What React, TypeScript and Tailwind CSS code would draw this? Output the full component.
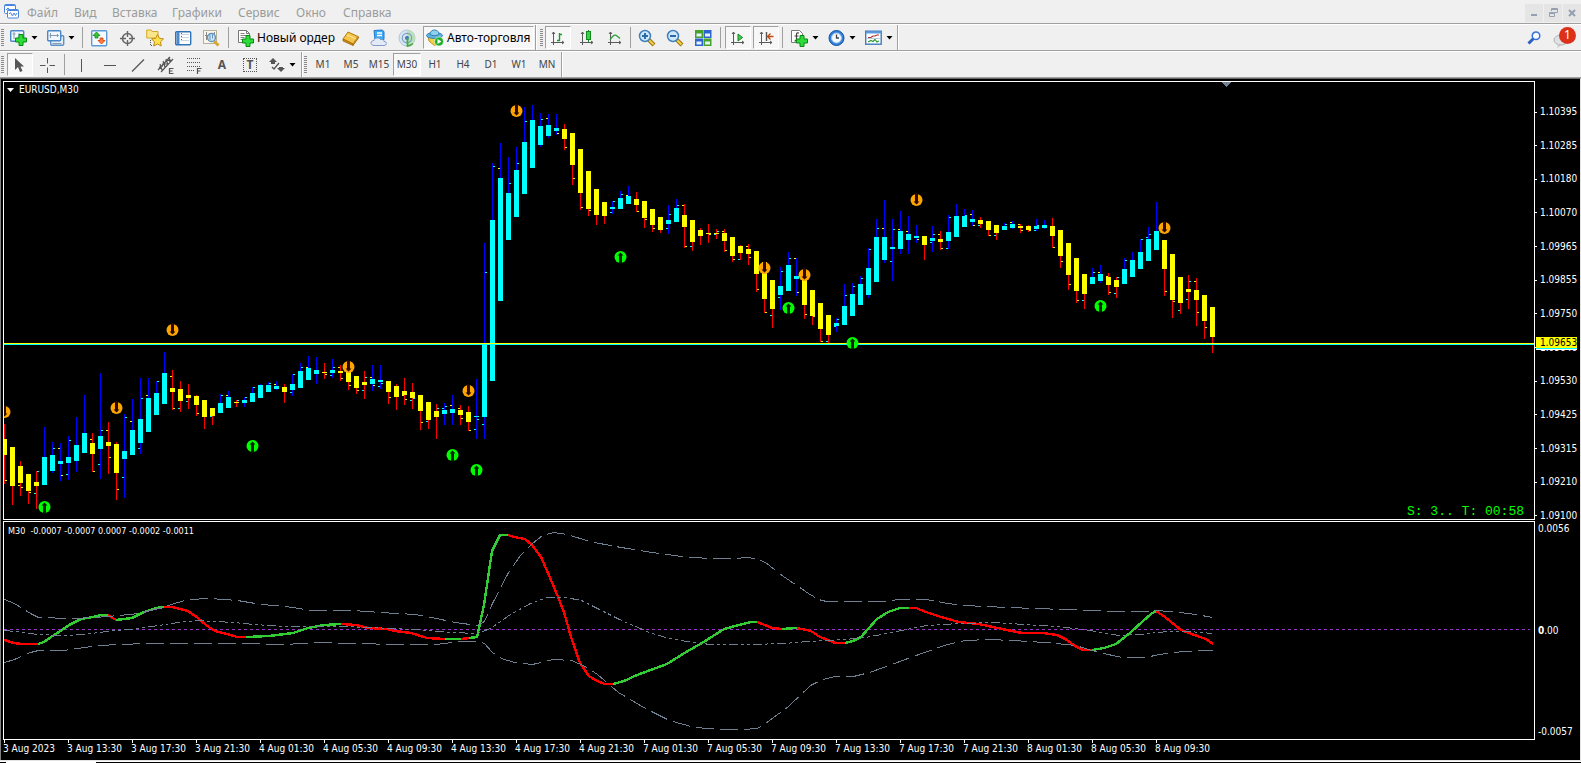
import React from "react";

type Candle = [string, number, number, number, number, string?];

/* colour, wick top, body top, body bottom, wick bottom, open (L) / close (R) ticks */
const candles: Candle[] = [
  ["y", 424, 439, 455, 484, "Ry480"], ["y", 447, 447, 486, 505], ["y", 461, 466, 483, 496, "Ly485 Ry487"],
  ["y", 474, 474, 491, 504, "Ry492"], ["y", 471, 482, 486, 509, "Rc471 Lc493"], ["c", 427, 457, 485, 485],
  ["c", 442, 455, 471, 473, "Rc448"], ["c", 443, 461, 464, 481, "Ly448 Ry475"], ["c", 436, 457, 463, 480, "Rc440 Lc474"],
  ["c", 417, 445, 461, 472], ["c", 395, 433, 453, 453], ["y", 433, 443, 454, 472, "Ly439 Ry471"],
  ["c", 373, 436, 449, 479, "Rc430 Lc464"], ["y", 422, 442, 446, 474, "Ly430 Ry457"], ["y", 442, 444, 473, 500, "Ry489"],
  ["c", 414, 451, 459, 498, "Rc417 Lc477"], ["c", 399, 430, 455, 455, "Ly421"], ["c", 378, 419, 443, 454, "Rc398 Lc448"],
  ["c", 378, 398, 432, 432, "Ly395"], ["c", 381, 393, 415, 415, "Rc381"], ["c", 352, 373, 404, 404],
  ["y", 370, 388, 392, 410, "Ly376 Ry408"], ["y", 381, 389, 401, 412, "Lc408"], ["y", 384, 395, 398, 409, "Lc401"],
  ["y", 395, 396, 405, 416, "Ry413"], ["y", 400, 400, 417, 429], ["y", 408, 408, 416, 425, "Lc416"],
  ["c", 394, 403, 413, 413, "Rc395"], ["c", 391, 397, 408, 408, "Ly395"], ["y", 400, 402, 403, 407, "Rc400"],
  ["c", 397, 400, 403, 407, "Rc397"], ["c", 387, 393, 402, 402, "Rc387"], ["c", 384, 385, 398, 398],
  ["c", 382, 385, 392, 392, "Rc383"], ["c", 381, 386, 389, 390, "Ly384"], ["y", 384, 387, 392, 403],
  ["c", 374, 384, 390, 396, "Rc374 Lc392"], ["c", 363, 371, 388, 388, "Rc367"], ["c", 356, 368, 380, 380, "Ly367"],
  ["c", 357, 370, 374, 384], ["y", 363, 372, 373, 379, "Ry374"], ["c", 359, 370, 373, 378, "Rc367 Lc375"],
  ["y", 365, 371, 373, 381, "Ly367 Ry378"], ["y", 369, 372, 382, 390, "Ry385"], ["y", 376, 376, 388, 394, "Ry390"],
  ["y", 371, 382, 385, 399, "Rc377 Lc390"], ["c", 365, 379, 384, 391, "Ly377 Ry385"], ["c", 365, 380, 382, 389, "Rc383 Lc386"],
  ["y", 381, 381, 392, 404, "Ry397"], ["y", 384, 386, 397, 410], ["y", 378, 391, 395, 405, "Ly395 Ry399"],
  ["y", 383, 392, 398, 409, "Rc398 Lc400"], ["y", 395, 395, 411, 430, "Ry422"], ["y", 402, 402, 420, 429, "Lc421"],
  ["y", 404, 411, 417, 439, "Rc408"], ["c", 403, 410, 414, 425, "Lc408 Rc406"], ["c", 395, 409, 413, 425, "Ly405"],
  ["y", 405, 410, 415, 425, "Ly408 Ry418"], ["y", 406, 412, 422, 431, "Ry430"], ["c", 379, 416, 417, 439, "Rc419 Lc429"],
  ["c", 243, 344, 417, 439, "Lc424 Rc272"], ["c", 163, 220, 381, 381, "Rc166"], ["c", 143, 178, 301, 301, "Ly168"],
  ["c", 157, 193, 240, 240, "Rc183"], ["c", 147, 170, 217, 217, "Rc163"], ["c", 107, 142, 194, 194, "Rc121"],
  ["c", 105, 120, 168, 168], ["c", 113, 126, 145, 147, "Rc119"], ["c", 114, 125, 136, 138, "Ly118"],
  ["c", 114, 128, 131, 135, "Ry133"], ["y", 124, 129, 139, 150, "Ry147"], ["y", 133, 133, 165, 185, "Ry178"],
  ["y", 149, 149, 193, 210, "Ry207"], ["y", 171, 171, 209, 216, "Ry210"], ["y", 189, 189, 215, 225],
  ["y", 202, 202, 216, 224], ["c", 201, 207, 209, 214, "Rc201 Lc212"], ["c", 191, 198, 209, 209, "Rc194"],
  ["c", 186, 196, 204, 204, "Ly195"], ["y", 192, 199, 205, 212, "Ry211"], ["y", 201, 201, 218, 228, "Ry219"],
  ["y", 209, 209, 225, 232, "Ry228"], ["y", 217, 217, 230, 233], ["c", 205, 220, 224, 234, "Rc214 Lc228"],
  ["c", 199, 208, 222, 222, "Rc205"], ["y", 204, 215, 227, 248, "Ly205 Ry246"], ["y", 220, 220, 242, 251, "Lc246"],
  ["y", 228, 230, 236, 245], ["y", 224, 233, 234, 243, "Ry234"], ["y", 229, 233, 234, 239, "Rc231 Lc234"],
  ["y", 229, 233, 241, 252, "Ly231 Ry250"], ["y", 237, 237, 256, 262, "Ry259"], ["y", 245, 246, 253, 260, "Lc259"],
  ["y", 244, 249, 254, 265, "Ly246 Ry257"], ["y", 251, 251, 274, 292, "Ry289"], ["y", 262, 262, 299, 313, "Ry312"],
  ["y", 280, 280, 309, 328, "Lc315"], ["c", 267, 286, 295, 310, "Rc271 Lc297"], ["c", 252, 265, 291, 291, "Rc258"],
  ["c", 258, 276, 279, 296, "Ly258 Ry292"], ["y", 277, 277, 305, 319, "Ry314"], ["y", 290, 290, 316, 325, "Ry316"],
  ["y", 303, 303, 329, 342, "Ry341"], ["y", 315, 315, 335, 343, "Lc341"], ["c", 318, 323, 326, 332, "Rc319 Lc326"],
  ["c", 284, 306, 325, 325, "Rc295"], ["c", 283, 294, 316, 316, "Rc286"], ["c", 276, 284, 305, 305, "Rc278"],
  ["c", 248, 268, 295, 298, "Rc249"], ["c", 219, 237, 282, 282, "Rc228"], ["c", 200, 237, 260, 263, "Ly228"],
  ["c", 219, 247, 249, 281, "Rc229 Lc261"], ["c", 211, 231, 249, 254, "Ly229"], ["c", 216, 234, 240, 254, "Ly231"],
  ["c", 225, 236, 238, 243, "Ry239"], ["y", 236, 236, 245, 260], ["c", 226, 238, 241, 252, "Rc234 Lc242"],
  ["y", 231, 239, 242, 250, "Ly234 Ry248"], ["c", 215, 232, 241, 249, "Rc217 Lc248"], ["c", 204, 216, 237, 237],
  ["c", 209, 216, 227, 227, "Rc215"], ["c", 210, 219, 222, 226, "Ly214 Ry225"], ["y", 217, 220, 224, 228, "Lc225"],
  ["y", 221, 221, 230, 236, "Ry235"], ["y", 225, 225, 233, 240, "Lc235"], ["c", 223, 226, 230, 230, "Rc224"],
  ["c", 221, 224, 228, 229, "Ly222"], ["y", 224, 226, 228, 233, "Ly224 Ry230"], ["y", 225, 226, 230, 232, "Ry230"],
  ["c", 219, 226, 229, 231, "Rc225 Lc230"], ["c", 220, 225, 228, 229], ["y", 218, 226, 236, 248, "Ry247"],
  ["y", 230, 230, 256, 268, "Ry261"], ["y", 243, 243, 275, 290, "Ry284"], ["y", 258, 258, 291, 303, "Ry300"],
  ["y", 274, 274, 294, 309, "Lc300"], ["c", 268, 277, 284, 284, "Rc272"], ["c", 265, 274, 281, 283, "Ly272"],
  ["y", 273, 277, 285, 295, "Ly276 Ry292"], ["y", 277, 280, 287, 298, "Rc277 Lc293"], ["c", 258, 269, 284, 284, "Rc260"],
  ["c", 252, 260, 277, 277], ["c", 239, 252, 269, 269, "Rc239"], ["c", 227, 239, 261, 261, "Rc234 Lc237"],
  ["c", 202, 231, 250, 250], ["y", 240, 240, 269, 296, "Ry291"], ["y", 254, 254, 300, 318, "Ry301"],
  ["y", 277, 277, 303, 314, "Lc310"], ["y", 275, 289, 292, 309, "Rc281 Lc299"], ["y", 278, 290, 300, 326, "Ly281 Ry312"],
  ["y", 295, 295, 321, 339, "Ry327"], ["y", 307, 307, 337, 353],
];

const sellMarks = [[4, 412], [116, 408], [172, 330], [348, 367], [468, 391], [516, 111], [764, 268], [804, 275], [916, 200], [1164, 228]];
const buyMarks = [[44, 507], [252, 446], [452, 455], [476, 470], [620, 257], [788, 308], [852, 343], [1100, 306]];

const momentum: [string, string][] = [
  ["r", "4,640 14,643 22,644 38,644"],
  ["g", "38,644 44,642 51,637 62,630 69,625 81,619 93,617 101,615 108,615"],
  ["r", "108,615 116,620"],
  ["g", "116,620 132,618 144,612 156,608 164,607"],
  ["r", "164,607 172,607 188,611 198,618 206,625 215,631 227,634 237,637 246,637"],
  ["g", "246,637 269,636 293,633 308,628 324,625 341,624"],
  ["r", "341,624 356,625 368,628 387,629 395,631 411,633 427,638 445,639"],
  ["g", "445,639 461,639"],
  ["r", "461,639 469,638"],
  ["g", "469,638 477,637 484,605 492,551 500,535 508,535"],
  ["r", "508,535 514,537 525,539 532,545 541,557 548,573 556,592 564,612 571,637 580,663 589,676 597,681 605,684 613,684"],
  ["g", "613,684 624,681 637,675 667,664 686,652 702,643 724,629 739,625 751,622 757,622"],
  ["r", "757,622 765,625 772,628 782,629"],
  ["g", "782,629 797,628"],
  ["r", "797,628 811,631 820,637 835,643 845,643"],
  ["g", "845,643 853,641 861,637 869,628 877,619 888,612 900,608 909,608"],
  ["r", "909,608 916,608 926,612 941,617 959,622 979,624 1002,629 1022,633 1043,633 1057,635 1067,640 1075,646 1083,650 1092,650"],
  ["g", "1092,650 1104,648 1116,644 1130,633 1143,621 1151,614 1156,611"],
  ["r", "1156,611 1165,617 1181,630 1200,637 1206,639 1213,644"],
];

const upperBand =
  "4,599 14,603 22,608 30,613 38,617 71,618 95,617 119,615 138,613 162,607 174,603 188,599 210,598 237,600 261,604 285,606 312,610 352,610 380,612 415,614 431,617 455,622 477,625 484,621 492,603 508,572 520,555 532,543 542,535 553,532 567,534 589,541 615,546 645,551 681,556 708,558 737,558 745,557 755,558 765,562 783,576 808,593 818,599 826,601 886,601 898,599 926,599 947,603 963,605 1008,607 1090,610 1118,611 1147,611 1153,610 1171,611 1196,614 1212,617";
const middleBand =
  "4,630 24,632 36,634 67,635 91,633 115,630 130,629 158,625 178,622 198,620 233,622 253,624 285,626 340,626 395,628 427,630 451,632 477,633 490,628 510,614 530,603 547,597 565,597 581,600 597,608 619,619 649,632 665,637 686,641 710,644 751,644 783,643 808,641 845,639 865,637 886,633 906,629 926,625 959,623 992,622 1024,624 1057,626 1090,630 1118,635 1139,634 1167,631 1188,631 1212,633";
const lowerBand =
  "4,662 14,659 30,652 38,650 63,650 91,646 115,644 150,643 202,643 237,643 285,644 316,642 356,643 395,644 435,644 461,641 477,641 484,643 492,652 501,658 514,662 532,664 553,659 571,660 585,666 597,674 618,692 645,708 669,720 694,727 722,729 743,729 757,728 765,723 788,706 810,685 822,679 835,676 853,676 869,672 886,666 910,657 947,644 965,640 988,639 1012,640 1045,642 1075,645 1098,652 1122,657 1145,657 1159,654 1183,651 1200,650 1212,650";

const prices = ["1.10395", "1.10285", "1.10180", "1.10070", "1.09965", "1.09855", "1.09750", "1.09640", "1.09530", "1.09425", "1.09315", "1.09210", "1.09100"];
const times = [
  "3 Aug 2023", "3 Aug 13:30", "3 Aug 17:30", "3 Aug 21:30", "4 Aug 01:30", "4 Aug 05:30", "4 Aug 09:30", "4 Aug 13:30", "4 Aug 17:30", "4 Aug 21:30",
  "7 Aug 01:30", "7 Aug 05:30", "7 Aug 09:30", "7 Aug 13:30", "7 Aug 17:30", "7 Aug 21:30", "8 Aug 01:30", "8 Aug 05:30", "8 Aug 09:30",
];

const tone: Record<string, string> = { c: "#00ffff", y: "#ffff00", r: "#ff0000", g: "#32cd32" };
const chartFont = "font-['DejaVu_Sans_Condensed','DejaVu_Sans',sans-serif] text-white";

function PriceChart() {
  return (
    <svg className="block h-full w-full" shapeRendering="crispEdges" role="img" aria-label="EURUSD M30">
      <g transform="translate(-4 -82)">
        {candles.map(([c, wt, bt, bb, wb, ticks], i) => {
          const x = 4 + i * 8;
          return (
            <g key={i}>
              <rect x={x} y={wt} width={1} height={wb - wt} fill={c === "c" ? "#0000ff" : "#ff0000"} />
              <rect x={x - 2} y={bt} width={5} height={bb - bt} fill={tone[c]} />
              {ticks?.split(" ").map((t) => (
                <rect key={t} x={t[0] === "L" ? x - 2 : x + 1} y={Number(t.slice(2))} width={2} height={1} fill={tone[t[1]]} />
              ))}
            </g>
          );
        })}
        <rect x={4} y={343} width="100%" height={1} fill="#ffff00" />
        <rect x={4} y={344} width="100%" height={1} fill="#00ffff" />
        <path d="M1222 82h9l-4 5h-1z" fill="#708090" />
        <g shapeRendering="auto">
          {sellMarks.map(([x, y]) => (
            <g key={x} transform={`translate(${x + 0.5} ${y})`}>
              <circle r="6" fill="#ffa500" />
              <path d="M-1.500 -6.500H1.500V1.500H3L0 4.600L-3 1.500H-1.500Z" fill="#2a0a00" />
            </g>
          ))}
          {buyMarks.map(([x, y]) => (
            <g key={x} transform={`translate(${x + 0.5} ${y})`}>
              <circle r="6" fill="#00ff00" />
              <path d="M-1.500 6.500H1.500V-1.500H3L0 -4.600L-3 -1.500H-1.500Z" fill="#002000" />
            </g>
          ))}
        </g>
      </g>
    </svg>
  );
}

function IndicatorChart() {
  return (
    <svg className="block h-full w-full" shapeRendering="crispEdges" fill="none" role="img" aria-label="M30">
      <g transform="translate(-4 -522)">
        <line x1="4" x2="100%" y1="629.5" y2="629.5" stroke="#9932cc" strokeDasharray="3 3" />
        {momentum.map(([c, p]) => (
          <polyline key={p} points={p} stroke={tone[c]} strokeWidth="2.4" />
        ))}
        <g transform="translate(0.5 0.5)">
          <polyline points={upperBand} stroke="#708090" strokeDasharray="18 6" />
          <polyline points={middleBand} stroke="#708090" strokeDasharray="9 3 3 3 3 3" />
          <polyline points={lowerBand} stroke="#708090" strokeDasharray="18 6" />
        </g>
      </g>
    </svg>
  );
}

/* ---------- toolbar pieces ---------- */

const Grip = ({ className }: { className: string }) => (
  <svg className={`h-5 shrink-0 ${className}`} shapeRendering="crispEdges">
    {Array.from({ length: 9 }, (_, i) => (
      <rect key={i} x="1" y={1 + i * 2} width="3" height="1" fill="#8a8a8a" />
    ))}
  </svg>
);
const Sep = ({ className = "" }: { className?: string }) => <span className={`h-[21px] w-px shrink-0 bg-[#a0a0a0] ${className}`} />;
const End = () => <span className="h-full w-[2px] shrink-0 border-l border-r border-l-[#a0a0a0] border-r-white" />;
const Caret = () => <svg width="7" height="4" className="shrink-0"><path d="M0.500 0h6L3.500 3.500z" fill="#000" /></svg>;
const sunken = "border border-t-[#a0a0a0] border-l-[#a0a0a0] border-r-white border-b-white bg-[#f7f7f7]";

function Tool({ label, on, narrow, children }: { label: string; on?: boolean; narrow?: boolean; children: React.ReactNode }) {
  return (
    <button aria-label={label} aria-pressed={on} className={`flex h-[23px] shrink-0 items-center justify-center ${on ? `w-[26px] ${sunken} ${narrow ? "" : "mr-[2px]"}` : "w-7"}`}>
      {children}
    </button>
  );
}
function DropTool({ label, className = "w-[37px] pl-1", children }: { label: string; className?: string; children: React.ReactNode }) {
  return (
    <button aria-label={label} className={`flex h-[23px] shrink-0 items-center gap-[3px] ${className}`}>
      {children}
      <Caret />
    </button>
  );
}
const I = ({ children }: { children: React.ReactNode }) => (
  <svg width="18" height="18" viewBox="0 0 18 18" fill="none" className="shrink-0">{children}</svg>
);
const Plus = ({ x = 6, y = 5 }: { x?: number; y?: number }) => (
  <path transform={`translate(${x} ${y})`} d="M4 .5h4v3.500h3.500v4H8v3.500H4V8H.5V4H4z" fill="#2edb38" stroke="#078a12" />
);
const Axes = () => <path d="M4.500 3v13M2 13.500h13M3 5l1.500-2L6 5M13 12l2 1.500-2 1.500" stroke="#5a5a5a" />;
const Lens = ({ sign }: { sign: string }) => (
  <I>
    <path d="M11 11l5 5" stroke="#9a7413" strokeWidth="4" />
    <path d="M11 11l4.500 4.500" stroke="#f2cf4a" strokeWidth="2" />
    <circle cx="7" cy="7" r="5.500" fill="#cfe9fb" stroke="#3f80bd" strokeWidth="1.500" />
    <path d={sign} stroke="#2a69aa" strokeWidth="2" />
  </I>
);

function MenuBar() {
  const items: [string, string][] = [["Файл", "w-[47px]"], ["Вид", "w-[38px]"], ["Вставка", "w-[60px]"], ["Графики", "w-[66px]"], ["Сервис", "w-[58px]"], ["Окно", "w-[47px]"], ["Справка", "w-[60px]"]];
  return (
    <header className="flex h-6 shrink-0 items-center border-b border-[#a0a0a0] text-[12px] text-[#9b9b9b]">
      <svg width="15" height="15" viewBox="0 0 15 15" fill="none" className="ml-1 mr-2 shrink-0">
        <rect x=".5" y=".5" width="11" height="9" rx="1" fill="#fff" stroke="#4a86e0" />
        <path d="M1 1.500h10M2 6l2-2 2 2" stroke="#4a86e0" />
        <rect x="3.500" y="5.500" width="11" height="8.500" rx="1" fill="#fff" stroke="#4a86e0" />
        <path d="M4 6.500h10" stroke="#4a86e0" />
        <path d="M5 10l1.500-1.500 2 3.500L10 9l1.500 2.500L13 9" stroke="#4a86e0" />
      </svg>
      <nav className="flex pt-[2px]">
        {items.map(([t, w]) => (
          <button key={t} className={`text-left leading-4 ${w}`}>{t}</button>
        ))}
      </nav>
      <div className="ml-auto flex gap-px pt-[2px] text-[#94a0b0]">
        <button aria-label="Свернуть" className="flex h-[18px] w-[18px] items-center justify-center bg-[#e5e5e5]">
          <svg width="8" height="8"><path d="M1 6h6" stroke="currentColor" strokeWidth="2" /></svg>
        </button>
        <button aria-label="Восстановить" className="flex h-[18px] w-[18px] items-center justify-center bg-[#e5e5e5]">
          <svg width="9" height="9" fill="none" stroke="currentColor"><path d="M2.500 3V.5h6v4H6M2.500 1.500h6M.5 4.500h5v4h-5zM.5 5.500h5" /></svg>
        </button>
        <button aria-label="Закрыть" className="flex h-[18px] w-[18px] items-center justify-center bg-[#e5e5e5]">
          <svg width="8" height="8" stroke="currentColor" strokeWidth="2"><path d="M1 1l6 6M7 1L1 7" /></svg>
        </button>
      </div>
    </header>
  );
}

function MainToolbar() {
  return (
    <div className="flex h-[27px] shrink-0 items-center border-t border-b border-t-white border-b-[#a0a0a0]">
      <Grip className="w-[6px]" />
      <DropTool label="Новый график">
        <I>
          <rect x=".7" y="1.700" width="13" height="10.500" rx="1" fill="#f3f8ff" stroke="#4a88c7" strokeWidth="1.400" />
          <path d="M4 3v7M2.500 5h3M9 4v5" stroke="#8a9aac" />
          <Plus x={5} y={5} />
        </I>
      </DropTool>
      <DropTool label="Профили">
        <I>
          <rect x="3.700" y="6.700" width="13" height="9.500" rx="1" fill="#e4effa" stroke="#5b8fc6" strokeWidth="1.400" />
          <rect x=".7" y="1.700" width="13" height="10" rx="1" fill="#f3f8ff" stroke="#4a88c7" strokeWidth="1.400" />
          <path d="M3.500 4v5M2.500 6.500h9M10 5l1.500 1.500L10 8M5.500 14.500h9" stroke="#8a9aac" />
        </I>
      </DropTool>
      <Sep className="mx-[2px]" />
      <Tool label="Обзор рынка">
        <I>
          <rect x="1.700" y="1.700" width="15" height="15" rx="1" fill="#f5faff" stroke="#5c9bd8" strokeWidth="1.400" />
          <path d="M6.500 3L10 6.500H8V9H5V6.500H3z" fill="#35c435" stroke="#138a13" strokeWidth=".8" />
          <path d="M11.500 15L15 11.500H13V9h-3v2.500H8z" fill="#ff7e3d" stroke="#cf3d0a" strokeWidth=".8" />
        </I>
      </Tool>
      <Tool label="Окно данных">
        <I><circle cx="9.500" cy="9.500" r="5" stroke="#666" strokeWidth="1.500" /><path d="M9.500 2v6M9.500 11v6M2 9.500h6M11 9.500h6" stroke="#666" strokeWidth="1.400" /></I>
      </Tool>
      <Tool label="Навигатор">
        <I>
          <path d="M.7 3V1h4.500l1 1.500H12V9H.7z" fill="#fbe58b" stroke="#d2ab28" />
          <path d="M4.500 11v5.500h3" stroke="#555" strokeDasharray="1 1" />
          <path d="M11.500 5.500l1.900 3.800 4.100.6-3 2.900.7 4.200-3.700-2-3.700 2 .7-4.200-3-2.900 4.100-.6z" fill="#ffe14d" stroke="#c08a10" />
        </I>
      </Tool>
      <Tool label="Терминал">
        <I>
          <rect x="1.700" y="2.700" width="15" height="13" rx="1" fill="#fff" stroke="#2f72b8" strokeWidth="1.400" />
          <path d="M2.500 3h3v12h-3z" fill="#4d8ccc" /><path d="M7 5.500h8M7 8.500h8M7 11.500h8" stroke="#c9d3df" /><path d="M7.500 4v9" stroke="#d33" strokeDasharray="1 2" />
        </I>
      </Tool>
      <Tool label="Тестер стратегий">
        <I>
          <rect x="1.500" y="1.500" width="13" height="13" fill="#faf7ea" stroke="#b5b09a" />
          <path d="M4.500 3v8M12.500 3v8M3 6.500h3" stroke="#8a8a8a" />
          <path d="M12 12l4.500 4.500" stroke="#d9a531" strokeWidth="3" />
          <circle cx="9.500" cy="8.500" r="4" fill="#cde5f7" fillOpacity=".85" stroke="#5c90bd" strokeWidth="1.300" /><path d="M8 6v5M10.500 5.500v4" stroke="#5c90bd" />
        </I>
      </Tool>
      <Sep className="ml-[3px] mr-[2px]" />
      <button className="flex h-[23px] w-[106px] shrink-0 items-center gap-[2px] whitespace-nowrap pl-[6px]">
        <I>
          <path d="M1.500 1.500h8l3 3v9h-11z" fill="#fff" stroke="#777" /><path d="M9.500 1.500v3h3" stroke="#777" />
          <path d="M3.500 4.500h4M3.500 6.500h7M3.500 8.500h4M3.500 10.500h3" stroke="#888" />
          <Plus x={5} y={6} />
        </I>
        Новый ордер
      </button>
      <Tool label="Маркет">
        <I>
          <path d="M1 10l5-7 10 4.500-5 7.500z" fill="#f3c64a" stroke="#b37a10" /><path d="M1 10v2l10 4.500V15zM11 15v1.500L16.500 9V7.500" fill="#c98b17" stroke="#a36b0c" strokeWidth=".8" /><path d="M5 6c3 1 6 3 9 4" stroke="#fde9a0" />
        </I>
      </Tool>
      <Tool label="Виртуальный хостинг">
        <I>
          <path d="M4 1.500l8-.5 2 1.500v8H5z" fill="#3fa9f5" stroke="#1f79c9" /><path d="M7 4h5M7 6.500h5" stroke="#fff" strokeWidth="1.300" />
          <path d="M4 16.500c-4 0-4-5 0-5 .5-3 5-3.500 6.500-1 3-.5 3.500 1 3.500 2 3.500 0 3 4 0 4z" fill="#e3eaf5" stroke="#7f9cc8" />
        </I>
      </Tool>
      <Tool label="Сигналы">
        <I>
          <circle cx="9" cy="9" r="8" fill="#d6e4f3" stroke="#b4c6dc" /><path d="M9 1a8 8 0 010 16z" fill="#b9e0b8" />
          <circle cx="9" cy="9" r="4.700" stroke="#7d9fc4" strokeWidth="1.200" /><circle cx="9" cy="9" r="2" fill="#3d75b5" /><path d="M9.500 9v8a8 8 0 005.500-2.500" stroke="#49a845" strokeWidth="1.800" />
        </I>
      </Tool>
      <button aria-pressed="true" className={`ml-[2px] mr-px flex h-[23px] w-[111px] shrink-0 items-center gap-[3px] whitespace-nowrap pl-[2px] ${sunken}`}>
        <I>
          <path d="M2 7h13l-1.500 6-5 3.500L3 12z" fill="#f5cf45" stroke="#c09020" />
          <ellipse cx="8.500" cy="6.500" rx="8" ry="3" fill="#5fb3dd" stroke="#2f82b4" /><path d="M4 5.500c0-6 9-6 9 0-2 1.500-7 1.500-9 0z" fill="#8fd0ee" stroke="#2f82b4" />
          <circle cx="13" cy="12.500" r="4.500" fill="#1fae2b" stroke="#fff" strokeWidth=".6" /><path d="M11.500 10v5l4-2.500z" fill="#fff" />
        </I>
        Авто-торговля
      </button>
      <End />
      <Grip className="ml-[2px] w-[6px]" />
      <Tool label="Бары" on><I><Axes /><path d="M8 11.500h3M10.500 4v8M10 5.500h3" stroke="#1f9a2a" strokeWidth="1.400" /></I></Tool>
      <Tool label="Свечи"><I><Axes /><path d="M10.500 1v12" stroke="#138a1c" /><rect x="8.500" y="2.500" width="4" height="8" fill="#35d345" stroke="#138a1c" /></I></Tool>
      <Tool label="Линия"><I><Axes /><path d="M4 11c3-5 5-6 7-4l3 2.500" stroke="#2da13a" strokeWidth="1.300" /></I></Tool>
      <Sep className="ml-px mr-[2px]" />
      <Tool label="Увеличить"><Lens sign="M4 7h6M7 4v6" /></Tool>
      <Tool label="Уменьшить"><Lens sign="M4 7h6" /></Tool>
      <Tool label="Плитка">
        <svg width="18" height="18" viewBox="0 0 18 18" className="shrink-0">
          <path d="M1 1h8v8H1zM9.500 9.500H17.500v7.500H9.500z" fill="#46a32a" /><path d="M9.500 1h8v8h-8zM1 9.500h8v7.500H1z" fill="#2c64d0" />
          <path d="M2.500 4.500H7.500v3H2.500zM11 4.500h5v3h-5zM2.500 12.500h5v3h-5zM11 12.500h5v3h-5z" fill="#e8f3ff" />
        </svg>
      </Tool>
      <Sep className="ml-[3px] mr-1" />
      <Tool label="Автопрокрутка" on><I><Axes /><path d="M9 5v7l4.500-3.500z" fill="#45cf52" stroke="#12861c" /></I></Tool>
      <Tool label="Сдвиг графика" on><I><Axes /><path d="M9.500 3v9" stroke="#555" strokeWidth="1.400" /><path d="M10.500 7.500h6M13.500 4.500l-3 3 3 3" stroke="#c24a12" strokeWidth="1.300" /></I></Tool>
      <Sep className="ml-px mr-1" />
      <DropTool label="Индикаторы">
        <I>
          <path d="M.5 1.500h8l3 3v9H.5z" fill="#fff" stroke="#777" /><path d="M8 4c-2-.5-2.500 0-2.500 2v4c0 1.500-.5 2-2 2M3.500 7h4" stroke="#444" strokeWidth="1.200" />
          <Plus x={5} y={6} />
        </I>
      </DropTool>
      <DropTool label="Периоды">
        <I><circle cx="8.500" cy="9" r="7.500" fill="#2f7fdb" stroke="#14529e" /><circle cx="8.500" cy="9" r="5" fill="#f4f9ff" stroke="#9cc3ea" /><path d="M8.500 5.500V9H11" stroke="#444" strokeWidth="1.300" /></I>
      </DropTool>
      <DropTool label="Шаблоны" className="w-9 pl-1">
        <I>
          <rect x=".7" y="2.200" width="15.500" height="13" fill="#fff" stroke="#3d7cc0" strokeWidth="1.400" /><path d="M1 3.500h15" stroke="#5a9be0" strokeWidth="2" />
          <path d="M3 8.500h3l2-1.500h2l2-1h2" stroke="#a33" strokeWidth="1.200" /><path d="M3 13l3-1.500 2 1 2-2 2 2.500 2-1" stroke="#2b9a35" strokeWidth="1.200" /><path d="M2 9.500h13" stroke="#bcd" />
        </I>
      </DropTool>
      <End />
      <div className="ml-auto flex items-center gap-3 pr-1">
        <button aria-label="Поиск">
          <svg width="14" height="14" fill="none"><path d="M1.500 12.500l5-5" stroke="#2a5fc4" strokeWidth="3" /><circle cx="9" cy="4.800" r="3.800" fill="#f7fbff" stroke="#3a72d8" strokeWidth="1.500" /></svg>
        </button>
        <button aria-label="Уведомления" className="relative h-5 w-6">
          <svg width="24" height="20" className="absolute left-0 top-[2px]"><ellipse cx="8" cy="10" rx="7" ry="5" fill="#e1e1e4" stroke="#b0b0b4" /><path d="M5 15l-1 3 5-3z" fill="#c9c9cc" /></svg>
          <span className="absolute -top-px left-[6px] flex h-[17px] w-[17px] items-center justify-center rounded-full bg-[#dd3018] text-[12px] leading-none text-white">1</span>
        </button>
      </div>
    </div>
  );
}

const S = "#555";
function LineToolbar() {
  const frames = ["M1", "M5", "M15", "M30", "H1", "H4", "D1", "W1", "MN"];
  return (
    <div className="flex h-[27px] shrink-0 items-center border-t border-b border-t-white border-b-[#a0a0a0]">
      <Grip className="w-[7px]" />
      <Tool label="Курсор" on narrow><I><path d="M4 2v12l3-3 2 5 2.500-1-2-4.500H13z" fill={S} /></I></Tool>
      <Tool label="Перекрестие"><I><path d="M9.500 2v5.500M9.500 11.500V17M2 9.500h5.500M11.500 9.500H17" stroke={S} /></I></Tool>
      <Sep className="mx-[3px]" />
      <Tool label="Вертикальная линия"><I><path d="M8.500 3v13" stroke={S} /></I></Tool>
      <Tool label="Горизонтальная линия"><I><path d="M3 9.500h12" stroke={S} /></I></Tool>
      <Tool label="Трендовая линия"><I><path d="M3 15.500L15 3.500" stroke={S} strokeWidth="1.200" /></I></Tool>
      <Tool label="Канал">
        <I><path d="M1 14L13 1M4 16L16 3M3 8l2 6M6 5l2 6M9 3l2 6M12 1l1 6M2 11l4-1M5 8h5M8 5l6-1" stroke={S} strokeWidth="1.200" /><path d="M16.500 12.500h-4v5h4M12.500 15h3" stroke={S} strokeWidth="1.200" /></I>
      </Tool>
      <Tool label="Фибоначчи">
        <I><path d="M2 2.500h14M2 6.500h14M2 10.500h14M2 14.500h8" stroke={S} strokeDasharray="1 1" /><path d="M16.500 12.500h-4V18M12.500 15h3" stroke={S} strokeWidth="1.200" /></I>
      </Tool>
      <Tool label="Текст"><span className="text-[12px] font-bold text-[#555]">A</span></Tool>
      <Tool label="Метка">
        <span className="flex h-[14px] w-[14px] items-center justify-center border border-dotted border-[#555] text-[12px] font-bold leading-none text-[#555]">T</span>
      </Tool>
      <DropTool label="Стрелки" className="w-[37px] justify-end pr-[5px]">
        <I><path d="M5 2l4 4H7v2H3V6H1zM13 16l-4-4h2v-1h4v1h2z" fill={S} /><path d="M4 11l2 2 5-6" stroke={S} strokeWidth="1.300" /></I>
      </DropTool>
      <End />
      <Grip className="w-[6px]" />
      {frames.map((f) => (
        <button key={f} aria-pressed={f === "M30"} className={`flex h-[23px] w-7 shrink-0 items-center justify-center text-[10px] text-[#444] ${f === "M30" ? sunken : ""}`}>
          {f}
        </button>
      ))}
      <End />
    </div>
  );
}

export default function App() {
  return (
    <div className="flex h-screen flex-col overflow-hidden bg-[#f0f0f0] font-['Noto_Sans',sans-serif] text-[12px] text-black">
      <MenuBar />
      <MainToolbar />
      <LineToolbar />
      <main className="flex min-h-0 flex-1 flex-col border-t border-r border-l border-t-[#696969] border-r-[#e3e3e3] border-l-[#808080] bg-black pl-[2px] pt-[2px]">
        <section className="flex min-h-0 flex-[439_1_0%]">
          <div className="relative min-w-0 flex-1 overflow-hidden border border-white">
            <PriceChart />
            <h1 className={`absolute left-[3px] top-[2px] flex items-center gap-[5px] text-[10px] leading-3 ${chartFont}`}>
              <svg width="7" height="4"><path d="M0 0h7L3.500 4z" fill="#fff" /></svg>
              EURUSD,M30
            </h1>
            <p className="absolute bottom-0 right-[10px] whitespace-pre font-['Liberation_Mono',monospace] text-[13px] leading-[14px] text-[#00ff00]">S: 3.. T: 00:58</p>
          </div>
          <div className={`relative flex w-[45px] shrink-0 flex-col justify-between pt-[27px] text-[10px] ${chartFont}`}>
            {prices.map((p) => (
              <div key={p} className="flex h-2 items-center gap-[3px] leading-none">
                <span className="h-px w-[2px] bg-white" />
                {p}
              </div>
            ))}
            <div className="absolute left-px top-[256px] h-[13px] w-[41px] border-b border-white bg-[#00ffff] pb-px">
              <div className="h-full bg-[#ffff00] pl-1 leading-[11px] text-black">1.09653</div>
            </div>
          </div>
        </section>
        <section className="mt-px flex min-h-0 flex-[219_1_0%]">
          <div className="relative min-w-0 flex-1 overflow-hidden border border-white">
            <IndicatorChart />
            <h2 className={`absolute left-1 top-[3px] whitespace-pre text-[9px] leading-3 ${chartFont}`}>M30  -0.0007 -0.0007 0.0007 -0.0002 -0.0011</h2>
          </div>
          <div className={`flex w-[45px] shrink-0 flex-col justify-between py-1 pl-[3px] text-[10px] ${chartFont}`}>
            <span className="h-2 leading-[8px]">0.0056</span>
            <span className="h-2 leading-[8px]"><b>0</b>.00</span>
            <span className="h-2 leading-[8px]">-0.0057</span>
          </div>
        </section>
        <div className={`flex h-5 shrink-0 text-[10px] ${chartFont}`}>
          {times.map((t) => (
            <div key={t} className="w-16 shrink-0 whitespace-nowrap">
              <div className="ml-px h-[3px] w-px bg-white" />
              <div className="leading-3">{t}</div>
            </div>
          ))}
        </div>
      </main>
      <footer className="h-[3px] shrink-0 border-t border-[#e3e3e3] bg-black">
        <div className="h-px bg-white" />
        <div className="ml-[6px] h-px w-[90px] bg-white" />
      </footer>
    </div>
  );
}
